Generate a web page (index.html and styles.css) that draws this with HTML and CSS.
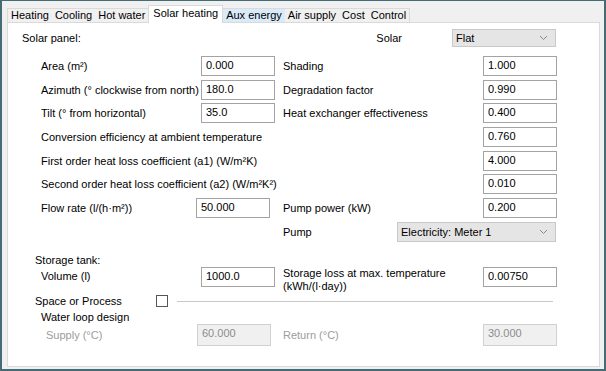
FILE: index.html
```html
<!DOCTYPE html>
<html lang="en">
  <head>
    <meta charset="UTF-8" />
    <meta name="viewport" content="width=device-width, initial-scale=1.0" />
    <title>Solar heating</title>
    <link rel="stylesheet" href="styles.css">
  </head>
  <body>
    <div class="window">
      <div class="tabs">
        <span class="tab first">Heating</span>
        <span class="tab">Cooling</span>
        <span class="tab">Hot water</span>
        <span class="tab active">Solar heating</span>
        <span class="tab hover">Aux energy</span>
        <span class="tab">Air supply</span>
        <span class="tab">Cost</span>
        <span class="tab last">Control</span>
      </div>
      <div class="panel">
        <div class="head">
          <span class="title">Solar panel:</span>
          <span class="kind">Solar</span>
          <div class="combo short">
            <span>Flat</span>
            <svg width="9" height="6" viewBox="0 0 9 6"><path d="M1 1l3.5 3.5L8 1" fill="none" stroke="#888" stroke-width="1"/></svg>
          </div>
        </div>

        <div class="grid">
          <span class="lbl">Area (m²)</span>
          <div class="box">0.000</div>
          <span class="lbl">Shading</span>
          <div class="box">1.000</div>

          <span class="lbl">Azimuth (° clockwise from north)</span>
          <div class="box">180.0</div>
          <span class="lbl">Degradation factor</span>
          <div class="box">0.990</div>

          <span class="lbl">Tilt (° from horizontal)</span>
          <div class="box">35.0</div>
          <span class="lbl">Heat exchanger effectiveness</span>
          <div class="box">0.400</div>

          <span class="lbl wide">Conversion efficiency at ambient temperature</span>
          <div class="box">0.760</div>

          <span class="lbl wide">First order heat loss coefficient (a1) (W/m²K)</span>
          <div class="box">4.000</div>

          <span class="lbl wide">Second order heat loss coefficient (a2) (W/m²K²)</span>
          <div class="box">0.010</div>

          <span class="lbl">Flow rate (l/(h·m²))</span>
          <div class="box nudge">50.000</div>
          <span class="lbl">Pump power (kW)</span>
          <div class="box">0.200</div>

          <div class="pump">
            <span>Pump</span>
            <div class="combo long">
              <span>Electricity: Meter 1</span>
              <svg width="9" height="6" viewBox="0 0 9 6"><path d="M1 1l3.5 3.5L8 1" fill="none" stroke="#888" stroke-width="1"/></svg>
            </div>
          </div>
        </div>

        <div class="storage">
          <div class="sub">Storage tank:</div>
          <div class="grid tank">
            <span class="lbl">Volume (l)</span>
            <div class="box">1000.0</div>
            <span class="lbl two">Storage loss at max. temperature<br>(kWh/(l·day))</span>
            <div class="box">0.00750</div>
          </div>

          <div class="space">
            <span class="sub">Space or Process</span>
            <span class="check"></span>
            <span class="rule"></span>
          </div>
          <div class="loop">Water loop design</div>
          <div class="grid temps">
            <span class="lbl off">Supply (°C)</span>
            <div class="box dis">60.000</div>
            <span class="lbl off">Return (°C)</span>
            <div class="box dis">30.000</div>
          </div>
        </div>
      </div>
    </div>
  </body>
</html>
```

FILE: styles.css
```css
* {
  margin: 0;
  padding: 0;
  box-sizing: border-box;
}
body {
  background: #f0f0f0;
  font-family: "Liberation Sans", Arial, sans-serif;
  font-size: 11px;
  color: #000;
}
.window {
  width: 606px;
  height: 371px;
  border: 2px solid #456c75;
  border-top-width: 1px;
  padding: 4px 4px 0 5px;
  display: flex;
  flex-direction: column;
}
.tabs {
  display: flex;
  align-items: flex-end;
  height: 17px;
}
.tab {
  height: 14px;
  line-height: 13px;
  padding: 0 3px;
  border-top: 1px solid #dadada;
  background: #f0f0f0;
}
.tab.first {
  border-left: 1px solid #dadada;
}
.tab.last {
  border-right: 1px solid #dadada;
}
.tab.hover {
  background: #d9eaf9;
}
.tab.active {
  height: 18px;
  line-height: 15px;
  padding: 0 4px;
  background: #fff;
  border: 1px solid #dadada;
  border-bottom: 0;
  margin-bottom: -1px;
  position: relative;
  z-index: 1;
}
.panel {
  flex: 1;
  background: #fff;
  border: 1px solid #dadada;
  margin-bottom: 2px;
}
.head {
  display: flex;
  align-items: center;
  height: 18px;
  margin-top: 6px;
  padding: 0 43px 0 14px;
}
.title {
  flex: 1;
}
.kind {
  margin-right: 50px;
}
.combo {
  height: 18px;
  background: #e5e5e5;
  border: 1px solid #c9c9c9;
  display: flex;
  align-items: center;
  justify-content: space-between;
  padding: 0 7px 0 3px;
}
.combo.short {
  width: 104px;
}
.combo.long {
  width: 159px;
  height: 20px;
}
.grid {
  display: grid;
  grid-template-columns: 160px 82px 200px 74px;
  grid-auto-rows: 20px;
  row-gap: 3.7px;
  margin-top: 9px;
  padding-left: 33px;
  align-items: center;
}
.lbl.wide {
  grid-column: 1 / 4;
}
.box {
  width: 74px;
  height: 20px;
  border: 1px solid #a3a3a3;
  padding: 2px 4px 0;
  line-height: 13px;
}
.box.nudge {
  margin-left: -5px;
}
.pump {
  grid-column: 3 / 5;
  display: flex;
  align-items: center;
  justify-content: space-between;
  padding-right: 1px;
}
.storage {
  padding-left: 27px;
  margin-top: 12px;
}
.sub {
  line-height: 13px;
}
.storage .grid {
  padding-left: 6px;
  margin-top: 0;
}
.tank {
  align-items: start;
  margin-bottom: 8px;
}
.tank .lbl {
  line-height: 13px;
  padding-top: 3px;
}
.tank .lbl.two {
  padding-top: 0;
}
.space {
  display: flex;
  align-items: center;
  height: 13px;
}
.space .sub {
  width: 121px;
}
.check {
  width: 12px;
  height: 12px;
  border: 1px solid #555;
}
.rule {
  flex: 1;
  height: 1px;
  background: #c8c8c8;
  margin: 1px 46px 0 9px;
}
.loop {
  padding-left: 6px;
  margin-top: 3px;
  line-height: 13px;
}
.temps {
  grid-auto-rows: 22px;
  margin-top: 9px;
}
.lbl.off {
  color: #9c9c9c;
}
.temps .lbl.off:first-child {
  padding-left: 5px;
}
.box.dis {
  height: 22px;
  background: #f0f0f0;
  border-color: #d0d0d0;
  color: #8c8c8c;
}
.temps .box.dis:nth-child(2) {
  margin-left: -4px;
}
```
